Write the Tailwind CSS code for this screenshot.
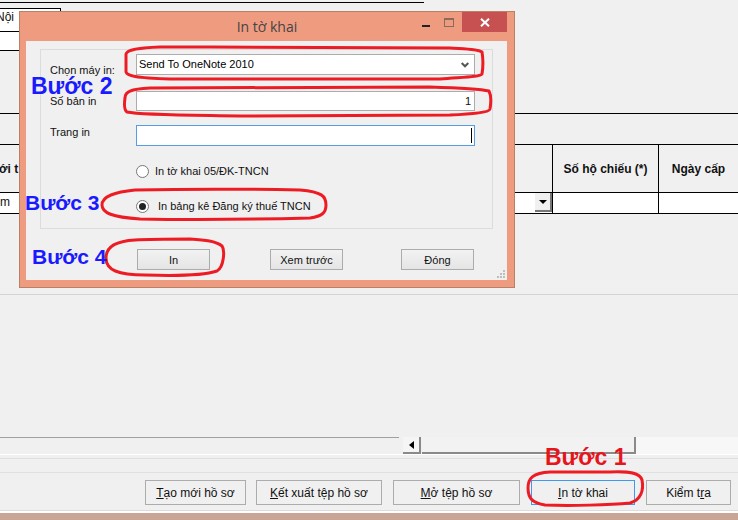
<!DOCTYPE html>
<html>
  <head>
    <title>In tờ khai</title>
    <script src="https://cdn.jsdelivr.net/npm/@tailwindcss/browser@4"></script>
  </head>
  <body class="bg-[#f0f0f0]">
    <div class="relative w-[738px] h-[520px] overflow-hidden bg-[#f0f0f0] font-['Liberation_Sans',sans-serif] text-[11px] text-[#111]">

      <!-- Form behind the dialog -->
      <div class="flex flex-col h-full">
        <div class="mt-[2px] h-px w-[424px] bg-black"></div>
        <div class="mt-[5px] h-[24px] w-[61px] bg-white border-y border-r border-black text-[12px] leading-[17px] -indent-[4px]">Nội</div>
        <div class="h-[19px] w-[19px] bg-white border-b border-black"></div>
        <div class="mt-[62px] h-px bg-black"></div>
        <div class="mt-[30px] grid grid-cols-[553px_106px_79px] border-y border-black">
          <div class="h-[47px] border-r border-black font-bold text-[12px] leading-[47px] -indent-[1px] pt-px">ới t</div>
          <div class="h-[47px] border-r border-black font-bold text-[12px] leading-[47px] text-center pt-px">Số hộ chiếu (*)</div>
          <div class="h-[47px] font-bold text-[12px] leading-[47px] text-center pt-px">Ngày cấp</div>
        </div>
        <div class="grid grid-cols-[553px_106px_79px] border-b border-black bg-white">
          <div class="relative h-[20px] border-r border-black text-[12px] leading-[18px]">
            m
            <div class="absolute right-0 top-0 flex h-[19px] w-[17px] items-center justify-center bg-[#f0f0f0] border-r-2 border-b-2 border-[#777]">
              <div class="border-x-[4px] border-t-[4px] border-x-transparent border-t-black"></div>
            </div>
          </div>
          <div class="border-r border-black"></div>
          <div></div>
        </div>

        <div class="mt-[80px] h-px bg-[#d4d4d4]"></div>

        <!-- Horizontal scrollbar -->
        <div class="mt-[142px] flex h-[17px]">
          <div class="w-[399px] border-t border-[#a0a0a0]"></div>
          <div class="ml-[4px] flex w-[18px] items-center justify-center bg-[#f5f5f5] border-r-2 border-b-2 border-[#8a8a8a]">
            <div class="border-y-[4px] border-r-[5px] border-y-transparent border-r-black"></div>
          </div>
          <div class="ml-px w-[214px] bg-[#f2f2f2] border-r-2 border-b-2 border-[#8a8a8a]"></div>
          <div class="flex-1 bg-[#f7f7f7]"></div>
        </div>
        <div class="h-px bg-white"></div>
        <div class="mt-[3px] h-px bg-[#dedede]"></div>
        <div class="mt-[13px] h-px bg-[#e0e0e0]"></div>

        <!-- Bottom buttons -->
        <div class="mt-[7px] flex h-[25px] pl-[145px]">
          <div class="flex w-[101px] items-center justify-center border border-[#acacac] bg-[#f0f0f0] text-[12px]"><span><span class="underline">T</span>ạo mới hồ sơ</span></div>
          <div class="ml-[10px] flex w-[126px] items-center justify-center border border-[#acacac] bg-[#f0f0f0] text-[12px]"><span><span class="underline">K</span>ết xuất tệp hồ sơ</span></div>
          <div class="ml-[11px] flex w-[127px] items-center justify-center border border-[#acacac] bg-[#f0f0f0] text-[12px]"><span><span class="underline">M</span>ở tệp hồ sơ</span></div>
          <div class="ml-[11px] flex w-[104px] items-center justify-center border border-[#3c9bef] bg-[#f0f0f0] text-[12px]"><span><span class="underline">I</span>n tờ khai</span></div>
          <div class="ml-[11px] flex w-[85px] items-center justify-center border border-[#acacac] bg-[#f0f0f0] text-[12px]"><span>Kiểm t<span class="underline">r</span>a</span></div>
        </div>
        <div class="mt-[5px] h-px bg-[#dcdcdc]"></div>
        <div class="h-[2px] bg-white"></div>
        <div class="flex-1 bg-[#c8a597]"></div>
      </div>

      <!-- Dialog -->
      <div class="absolute left-[19px] top-[11px] flex h-[277px] w-[496px] flex-col border border-[#b98068] bg-[#ee9b80]">
        <div class="relative h-[29px]">
          <div class="text-center font-['Open_Sans',sans-serif] text-[14px] leading-[30px] text-[#444]">In tờ khai</div>
          <div class="absolute left-[402px] top-[13px] h-[2px] w-[8px] bg-[#222]"></div>
          <div class="absolute left-[424px] top-[6px] h-[9px] w-[10px] border border-[#8a6a5c] border-t-2"></div>
          <div class="absolute left-[442px] top-0 flex h-[20px] w-[45px] items-center justify-center bg-[#c75050]">
            <svg width="10" height="9" viewBox="0 0 10 9"><path d="M1 .7 9 8.3M9 .7 1 8.3" stroke="#fff" stroke-width="2"/></svg>
          </div>
        </div>
        <div class="relative ml-[6px] mr-[7px] h-[239px] bg-[#f0f0f0] px-[14px] pt-[8px]">
          <div class="h-[180px] w-[453px] border border-[#dcdcdc] pl-[9px] pt-[4px]">
            <div class="flex h-[21px]">
              <div class="w-[86px] pt-[8px]">Chọn máy in:</div>
              <div class="flex w-[339px] items-center justify-between border border-[#acacac] bg-white pl-[2px] pr-[5px] text-black">
                Send To OneNote 2010
                <svg width="8" height="6" viewBox="0 0 8 6"><path d="M.7 1 4 4.3 7.3 1" fill="none" stroke="#555" stroke-width="2"/></svg>
              </div>
            </div>
            <div class="mt-[16px] flex h-[20px]">
              <div class="w-[86px] pt-[2px]">Số bản in</div>
              <div class="w-[339px] border border-[#acacac] bg-white pr-[3px] text-right leading-[18px]">1</div>
            </div>
            <div class="mt-[14px] flex h-[21px]">
              <div class="w-[86px] -mt-px">Trang in</div>
              <div class="flex w-[339px] justify-end border border-[#569de5] bg-white pr-[2px] pt-[2px] pb-[2px]"><div class="w-px bg-black"></div></div>
            </div>
            <div class="mt-[17px] flex h-[16px] items-center pl-[86px]">
              <div class="h-[13px] w-[13px] rounded-full border border-[#777] bg-white"></div>
              <div class="ml-[6px]">In tờ khai 05/ĐK-TNCN</div>
            </div>
            <div class="mt-[19px] flex h-[16px] items-center pl-[86px]">
              <div class="flex h-[13px] w-[13px] items-center justify-center rounded-full border border-[#777] bg-white"><div class="h-[7px] w-[7px] rounded-full bg-[#222]"></div></div>
              <div class="ml-[9px]">In bảng kê Đăng ký thuế TNCN</div>
            </div>
          </div>
          <div class="mt-[20px] flex pl-[97px]">
            <div class="flex h-[21px] w-[73px] items-center justify-center border border-[#acacac] bg-linear-to-b from-[#f2f2f2] to-[#e5e5e5] pt-px">In</div>
            <div class="ml-[60px] flex h-[21px] w-[73px] items-center justify-center border border-[#acacac] bg-linear-to-b from-[#f2f2f2] to-[#e5e5e5] pt-px">Xem trước</div>
            <div class="ml-[58px] flex h-[21px] w-[73px] items-center justify-center border border-[#acacac] bg-linear-to-b from-[#f2f2f2] to-[#e5e5e5] pt-px">Đóng</div>
          </div>
          <svg class="absolute bottom-[2px] right-[2px]" width="8" height="8" viewBox="0 0 8 8" fill="#bdbdbd"><path d="M6 0h2v2H6zM3 3h2v2H3zM6 3h2v2H6zM0 6h2v2H0zM3 6h2v2H3zM6 6h2v2H6z"/></svg>
        </div>
      </div>

      <!-- Red annotation outlines -->
      <svg class="absolute inset-0" width="738" height="520" viewBox="0 0 738 520" fill="none" stroke="#ed1c24" stroke-width="3" stroke-linejoin="round">
        <path d="M160 47C135 48 127 50 126 54L126 72C127 76 135 78 170 79L440 79C465 77 480 77 482 74 483 68 483 58 482 52 478 49 465 49 450 48L210 47Z"/>
        <path d="M150 88C130 89 125 92 125 98 124 105 124 110 127 112 140 115 180 115 240 116L450 115C470 114 489 113 490 109 491 103 491 95 489 91 480 89 460 88 430 87Z"/>
        <path d="M135 190C115 192 102 196 102 205 102 213 112 217 140 219 190 220 270 219 310 218 322 216 326 213 326 205 326 196 322 192 300 190 250 189 180 189 135 190Z"/>
        <path d="M135 240C115 241 106 247 106 258 106 270 118 275 145 275 175 276 205 275 217 271 224 267 225 250 222 246 216 241 205 240 190 239 170 239 150 239 135 240Z"/>
        <path d="M550 472C533 473 528 478 528 488 528 499 533 503 545 505 570 506 610 505 630 503 641 500 644 490 642 480 640 473 630 471 610 472Z"/>
      </svg>

      <!-- Step labels -->
      <span class="absolute left-[31px] top-[73px] text-[23px] font-bold leading-[26px] text-[#1a1aff]">Bước 2</span>
      <span class="absolute left-[25px] top-[191px] text-[21px] font-bold leading-[24px] text-[#1a1aff]">Bước 3</span>
      <span class="absolute left-[32px] top-[245px] text-[21px] font-bold leading-[24px] text-[#1a1aff]">Bước 4</span>
      <span class="absolute left-[545px] top-[444px] text-[23px] font-bold leading-[26px] text-[#e8141c]">Bước 1</span>
    </div>
  </body>
</html>
